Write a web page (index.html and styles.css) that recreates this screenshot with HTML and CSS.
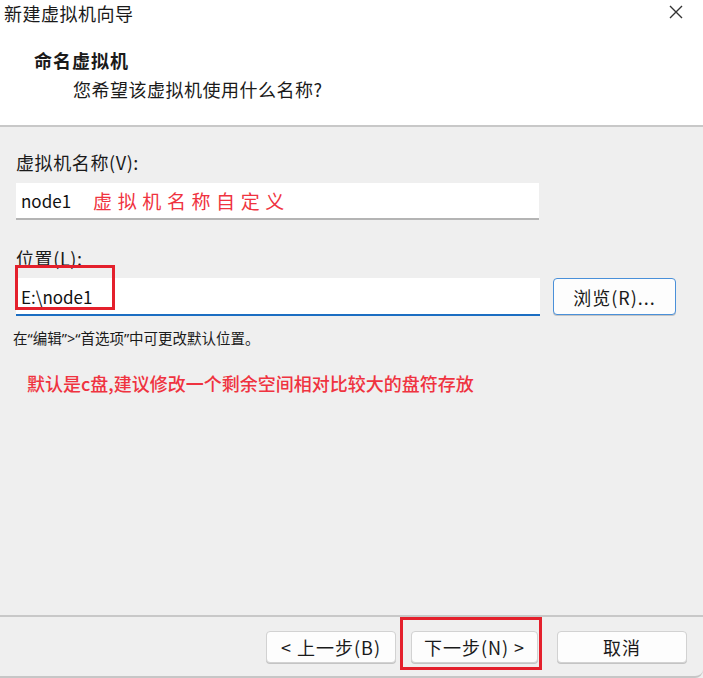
FILE: index.html
```html
<!DOCTYPE html>
<html lang="zh-CN">
<head>
    <meta charset="UTF-8">
    <meta name="viewport" content="width=device-width, initial-scale=1.0">
    <title>新建虚拟机向导</title>
    <link rel="stylesheet" href="styles.css">
</head>
<body>
    <div class="dialog">
        <div class="titlebar">
            <span class="title">新建虚拟机向导</span>
            <svg class="close" width="14" height="14" viewBox="0 0 14 14">
                <path d="M1 1 L13 13 M13 1 L1 13" stroke="#333" stroke-width="1.4" fill="none"/>
            </svg>
        </div>
        <div class="header">
            <div class="heading">命名虚拟机</div>
            <div class="prompt">您希望该虚拟机使用什么名称?</div>
        </div>
        <div class="body">
            <div class="label">虚拟机名称(V):</div>
            <div class="field">
                <span class="value">node1</span>
                <span class="note-inline">虚拟机名称自定义</span>
            </div>
            <div class="label label-loc">位置(L):</div>
            <div class="loc-row">
                <div class="field field-focus">
                    <span class="value">E:\node1</span>
                    <div class="mark mark-path"></div>
                </div>
                <button class="btn btn-browse">浏览(R)...</button>
            </div>
            <div class="hint">在“编辑”&gt;“首选项”中可更改默认位置。</div>
            <div class="note">默认是c盘,建议修改一个剩余空间相对比较大的盘符存放</div>
        </div>
        <div class="footer">
            <button class="btn btn-back">&lt; 上一步(B)</button>
            <div class="next-wrap">
                <button class="btn btn-next">下一步(N) &gt;</button>
                <div class="mark mark-next"></div>
            </div>
            <button class="btn btn-cancel">取消</button>
        </div>
    </div>
</body>
</html>
```

FILE: styles.css
```css
body {
    margin: 0;
    background: #efefef;
    font-family: "Noto Sans CJK SC", "Noto Sans", sans-serif;
    color: #1a1a1a;
}
.dialog {
    height: 678px;
    display: flex;
    flex-direction: column;
    box-sizing: border-box;
    border-bottom: 2px solid #c6c6c6;
    border-bottom-right-radius: 8px;
}
.titlebar {
    height: 28px;
    background: #fff;
    display: flex;
    justify-content: space-between;
    align-items: flex-start;
    padding: 0 20px 0 4px;
}
.title {
    font-size: 18px;
    line-height: 26px;
    letter-spacing: 0.5px;
}
.close {
    margin-top: 5px;
}
.header {
    background: #fff;
    padding: 20px 0 24px 34px;
    border-bottom: 2px solid #c8c8c8;
}
.heading {
    font-size: 18px;
    font-weight: bold;
    line-height: 24px;
    letter-spacing: 1px;
}
.prompt {
    font-size: 18px;
    line-height: 24px;
    margin: 5px 0 0 39px;
    letter-spacing: 0.5px;
}
.body {
    flex: 1;
    padding: 23px 16px 0 16px;
}
.label {
    font-size: 18px;
    line-height: 24px;
    letter-spacing: 0.6px;
}
.label-loc {
    margin-top: 26px;
}
.field {
    position: relative;
    width: 523px;
    height: 37px;
    box-sizing: border-box;
    margin-top: 9px;
    background: #fff;
    border-bottom: 2px solid #b4b4b4;
    display: flex;
    align-items: center;
    padding-left: 5px;
}
.value {
    font-size: 17px;
    color: #111;
}
.note-inline {
    font-size: 19px;
    color: #ef3340;
    margin-left: 22px;
    letter-spacing: 5.6px;
}
.loc-row {
    display: flex;
    align-items: flex-start;
    margin-top: 8px;
}
.loc-row .field {
    margin-top: 0;
    width: 524px;
    height: 38px;
    border-bottom: 2px solid #1b6ec2;
}
.mark {
    position: absolute;
    border: 3px solid #e4202c;
    box-sizing: border-box;
}
.mark-path {
    left: -1px;
    top: -13px;
    width: 100px;
    height: 45px;
}
.btn {
    font-family: "Noto Sans CJK SC", "Noto Sans", sans-serif;
    font-size: 18px;
    letter-spacing: 1px;
    color: #1a1a1a;
    background: #fdfdfd;
    border: 1px solid #d2d2d2;
    border-radius: 4px;
    height: 32px;
    padding: 0;
    box-shadow: 0 1px 0 #c4c4c4;
}
.btn-browse {
    margin-left: 13px;
    width: 123px;
    height: 37px;
    border: 1px solid #4a90d9;
}
.hint {
    font-family: "Noto Sans", "Noto Sans CJK SC", sans-serif;
    font-size: 14.5px;
    line-height: 24px;
    margin-top: 10px;
    margin-left: -3px;
}
.note {
    font-size: 18px;
    font-weight: 500;
    line-height: 24px;
    color: #ef3340;
    margin: 21px 0 0 11px;
}
.footer {
    border-top: 2px solid #c8c8c8;
    display: flex;
    justify-content: flex-end;
    align-items: flex-start;
    padding: 14px 16px 0 0;
    height: 45px;
}
.btn-back {
    width: 130px;
}
.next-wrap {
    position: relative;
    margin-left: 15px;
}
.btn-next {
    width: 127px;
}
.mark-next {
    left: -11px;
    top: -14px;
    width: 142px;
    height: 53px;
}
.btn-cancel {
    width: 130px;
    margin-left: 19px;
}
```
